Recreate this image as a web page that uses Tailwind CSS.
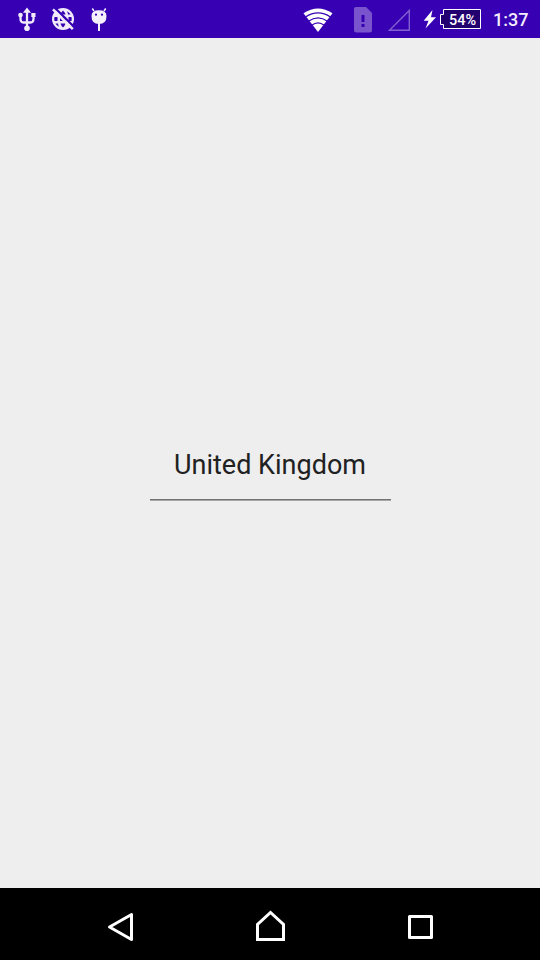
<!DOCTYPE html>
<html lang="en">
<head>
<meta charset="utf-8">
<title>Country</title>
<script src="https://cdn.jsdelivr.net/npm/@tailwindcss/browser@4"></script>
</head>
<body class="flex h-[960px] w-[540px] flex-col overflow-hidden bg-[#eeeeee] font-[Roboto,sans-serif]">
<header class="flex h-[38px] shrink-0 items-center justify-between bg-[#3700b3] pr-3 pl-[15px] text-white">
  <div class="flex gap-3">
    <svg width="24" height="38" viewBox="15 0 24 38" fill="none" stroke="#f1eafb" stroke-width="2.300">
      <path d="M27 11V28M20.500 15V18.500Q20.500 22.500 23.500 22.500H30.500Q33.500 22.500 33.500 18.500V15"/>
      <g fill="#f1eafb" stroke="none"><path d="M27 7.500L31 12.800H23Z"/><circle cx="20.500" cy="15" r="2.300"/><path d="M31.300 13H35.500V17H31.300Z"/><circle cx="27" cy="28.300" r="2.800"/></g>
    </svg>
    <svg width="24" height="38" viewBox="51 0 24 38" fill="none">
      <circle cx="63" cy="19" r="11" fill="#f1eafb"/>
      <g fill="#3700b3">
        <path d="M63 10.500Q65 12.500 65.500 14.500H60.500Q61 12.500 63 10.500ZM67 11.300Q69.500 12.500 70.500 14.500H68Q67.800 12.800 67 11.300Z"/>
        <path d="M54.500 17H57.500V21H54.500Q54 19 54.500 17ZM60 17H66V21H60ZM68.500 17H71.500Q72 19 71.500 21H68.500Z"/>
        <path d="M55.500 23.500H58Q58.200 25.200 59 26.700Q56.500 25.500 55.500 23.500ZM60.500 23.500H65.500Q65 25.500 63 27.500Q61 25.500 60.500 23.500Z"/>
      </g>
      <path d="M54.500 7.500L75 28" stroke="#3700b3" stroke-width="2.300"/>
      <path d="M53 9.300L72.800 29.100" stroke="#f1eafb" stroke-width="2.500"/>
    </svg>
    <svg width="24" height="38" viewBox="87 0 24 38" fill="#f5f0fd">
      <path d="M94 11L92.300 8.500M104 11L105.700 8.500" stroke="#f5f0fd" stroke-width="1.500"/>
      <path d="M91.500 16Q91.500 10.300 99 10.300Q106.500 10.300 106.500 16Q106.500 24 99 24Q91.500 24 91.500 16Z"/>
      <path d="M98 23H100V31H98Z"/>
      <g fill="#3700b3"><circle cx="96" cy="14.700" r="1.100"/><circle cx="102" cy="14.700" r="1.100"/></g>
    </svg>
  </div>
  <div class="flex items-center">
    <svg width="184" height="38" viewBox="300 0 184 38" fill="none">
      <path d="M318 32L303.500 13.300Q318 3.500 332.500 13.300Z" fill="#fff"/>
      <g stroke="#3700b3" stroke-width="1.300"><path d="M305.500 17Q318 8.800 330.500 17M308.500 21.200Q318 14.400 327.500 21.200M311.800 25.300Q318 20.600 324.200 25.300"/></g>
      <path d="M356 7H366L372 13V30Q372 32.500 369.500 32.500H356.500Q354 32.500 354 30V9Q354 7 356 7Z" fill="#7a54cd"/>
      <path d="M361.500 15H364.500V22H361.500ZM361.500 24H364.500V27H361.500Z" fill="#3700b3"/>
      <path d="M409.300 10.500V30.300H389.500Z" stroke="#8260d1" stroke-width="1.400"/>
      <path d="M432.500 10L423.700 20.800H428.500L425.500 28.500L436 17.300H431Z" fill="#fff"/>
      <path d="M443.500 9.500H480.500V28.500H443.500V24.500H440.500V14.500H443.500Z" fill="#22006f" stroke="#fff"/>
      <text x="462.500" y="24.700" text-anchor="middle" textLength="27" lengthAdjust="spacingAndGlyphs" class="fill-white text-[15.500px] font-medium">54%</text>
    </svg>
    <span class="ml-[9px] w-[35px] pt-px text-[18px] leading-[38px] font-medium whitespace-nowrap text-[#f3edfc]">1:37</span>
  </div>
</header>
<main class="flex flex-1 flex-col items-center pt-[400px]">
  <div class="ml-px flex h-[62.500px] w-[241px] flex-col items-center pt-[9px] text-[27px] leading-[36px] whitespace-nowrap text-[#212121]">
    <span class="mr-px h-[52px]">United Kingdom</span>
    <span class="h-px w-full shrink-0 bg-[#737373]"></span>
    <span class="h-px w-full shrink-0 bg-[#a6a6a6]"></span>
  </div>
</main>
<nav class="flex h-[72px] shrink-0 items-center justify-center bg-black">
  <svg width="340" height="72" viewBox="100 888 340 72" fill="none" stroke="#fff" stroke-width="3" stroke-linejoin="round">
    <path d="M131.500 914.500V939.500L109.500 927Z"/>
    <path d="M257.500 939.500V924.500L270.500 912.500L283.500 924.500V939.500Z" stroke-linejoin="miter"/>
    <path d="M409.500 916.500H431.500V937.500H409.500Z"/>
  </svg>
</nav>
</body>
</html>
